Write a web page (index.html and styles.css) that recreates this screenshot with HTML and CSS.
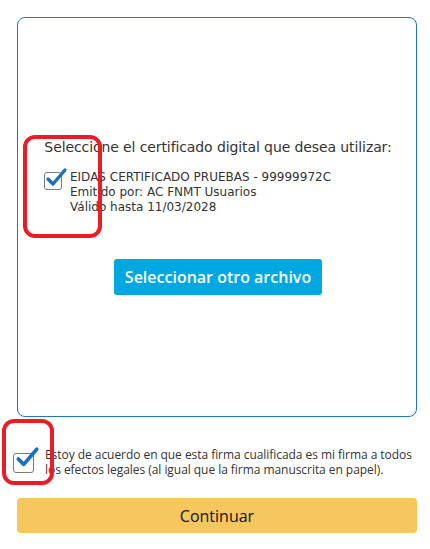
FILE: index.html
```html
<!DOCTYPE html>
<html lang="es">
<head>
    <meta charset="UTF-8">
    <meta name="viewport" content="width=device-width, initial-scale=1.0">
    <title>Firma</title>
    <link rel="stylesheet" href="styles.css">
</head>
<body>
    <div class="page">
        <div class="cert-box">
            <div class="cert-content">
                <p class="cert-title">Seleccione el certificado digital que desea utilizar:</p>
                <label class="cert-row">
                    <span class="check">
                        <svg viewBox="0 0 24 24" width="24" height="24"><path d="M4 12 L9 17 L21 3" fill="none" stroke="#1a6fc2" stroke-width="3.4" stroke-linecap="round" stroke-linejoin="round"/></svg>
                    </span>
                    <span class="cert-info">
                        EIDAS CERTIFICADO PRUEBAS - 99999972C<br>
                        Emitido por: AC FNMT Usuarios<br>
                        Válido hasta 11/03/2028
                    </span>
                </label>
                <div class="btn-wrap">
                    <button class="btn-file">Seleccionar otro archivo</button>
                </div>
            </div>
            <span class="mark mark-cert"></span>
        </div>

        <label class="agree-row">
            <span class="check check-lg">
                <svg viewBox="0 0 24 24" width="26" height="26"><path d="M4 12 L9 17 L21 3" fill="none" stroke="#1a6fc2" stroke-width="3.4" stroke-linecap="round" stroke-linejoin="round"/></svg>
            </span>
            <span class="agree-text">Estoy de acuerdo en que esta firma cualificada es mi firma a todos los efectos legales (al igual que la firma manuscrita en papel).</span>
            <span class="mark mark-agree"></span>
        </label>

        <button class="btn-continue">Continuar</button>
    </div>
</body>
</html>
```

FILE: styles.css
```css
body {
    margin: 0;
    padding: 0;
    background: white;
    font-family: 'DejaVu Sans', 'Open Sans', sans-serif;
    color: #333;
}
.page {
    padding: 17px 13px 0 17px;
}
.cert-box {
    position: relative;
    box-sizing: border-box;
    width: 400px;
    height: 400px;
    border: 1px solid #1f76b9;
    border-radius: 8px;
    display: flex;
    align-items: center;
}
.cert-content {
    width: 100%;
    padding: 0 24px 0 26px;
}
.cert-title {
    margin: 0 0 14px;
    font-size: 14px;
    line-height: 17px;
    letter-spacing: -0.1px;
    text-align: center;
    color: #333;
    white-space: nowrap;
}
.cert-row {
    display: flex;
    align-items: flex-start;
    gap: 8px;
}
.check {
    position: relative;
    flex: none;
    box-sizing: border-box;
    width: 18px;
    height: 18px;
    margin-top: 2px;
    border: 1px solid #7a7a7a;
    border-radius: 3px;
    background: white;
}
.check svg {
    position: absolute;
    left: -1px;
    top: -6px;
}
.cert-info {
    font-size: 12px;
    line-height: 15px;
    color: #333;
}
.btn-wrap {
    text-align: center;
    margin-top: 44px;
}
.btn-file {
    padding: 0 11px;
    height: 36px;
    background: #00a8e1;
    color: white;
    border: none;
    border-radius: 3px;
    font-family: 'Open Sans', sans-serif;
    font-size: 16px;
    font-weight: 600;
}
.agree-row {
    position: relative;
    display: flex;
    align-items: center;
    gap: 11px;
    margin: 30px 0 0 -4px;
}
.check-lg {
    width: 21px;
    height: 20px;
}
.check-lg svg {
    left: 0;
    top: -8px;
}
.agree-text {
    font-family: 'Open Sans', sans-serif;
    font-size: 12px;
    line-height: 15px;
    letter-spacing: -0.05px;
    color: #333;
}
.btn-continue {
    display: block;
    width: 400px;
    height: 35px;
    margin-top: 21px;
    background: #f7c75f;
    color: #111;
    border: none;
    border-radius: 4px;
    font-family: 'Open Sans', sans-serif;
    font-size: 16px;
}
.mark {
    position: absolute;
    border: 4px solid #ed1c24;
    border-radius: 12px;
    pointer-events: none;
}
.mark-cert {
    left: 5px;
    top: 117px;
    width: 71px;
    height: 95px;
}
.mark-agree {
    left: -11px;
    top: -28px;
    width: 44px;
    height: 58px;
}
```
